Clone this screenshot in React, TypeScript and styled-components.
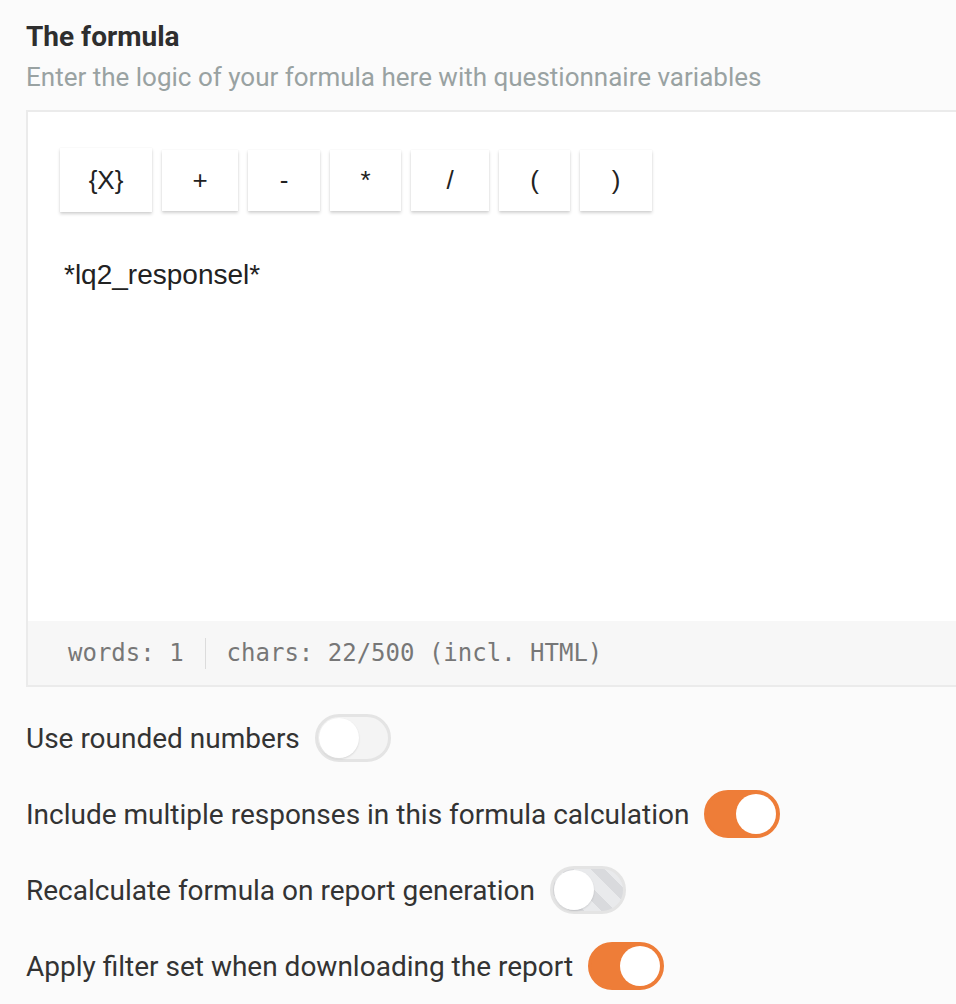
import React from 'react';
import styled, { createGlobalStyle } from 'styled-components';

const GlobalStyle = createGlobalStyle`
  html, body {
    margin: 0;
    padding: 0;
    background: #fbfbfb;
    overflow: hidden;
  }
  body {
    font-family: Roboto, 'Liberation Sans', sans-serif;
    color: #333;
  }
`;

type ToggleState = 'off' | 'on' | 'disabled';

const operators = [
  { label: '{X}', width: 92, tall: true },
  { label: '+', width: 76 },
  { label: '-', width: 72 },
  { label: '*', width: 71 },
  { label: '/', width: 78 },
  { label: '(', width: 71 },
  { label: ')', width: 72 },
];

const options: { label: string; state: ToggleState }[] = [
  { label: 'Use rounded numbers', state: 'off' },
  { label: 'Include multiple responses in this formula calculation', state: 'on' },
  { label: 'Recalculate formula on report generation', state: 'disabled' },
  { label: 'Apply filter set when downloading the report', state: 'on' },
];

const App = () => {
  return (
    <>
      <GlobalStyle />
      <Page>
        <Title>The formula</Title>
        <Subtitle>Enter the logic of your formula here with questionnaire variables</Subtitle>
        <Editor>
          <Toolbar>
            {operators.map((op) => (
              <OpButton key={op.label} $width={op.width} $tall={!!op.tall}>
                {op.label}
              </OpButton>
            ))}
          </Toolbar>
          <Content>*lq2_responsel*</Content>
          <StatusBar>
            <span>words: 1</span>
            <Divider />
            <span>chars: 22/500 (incl. HTML)</span>
          </StatusBar>
        </Editor>
        <Options>
          {options.map((opt) => (
            <OptionRow key={opt.label}>
              <span>{opt.label}</span>
              <Toggle $state={opt.state}>
                <Knob $state={opt.state} />
              </Toggle>
            </OptionRow>
          ))}
        </Options>
      </Page>
    </>
  );
};

const Page = styled.div`
  padding: 21px 0 0 26px;
`;

const Title = styled.h2`
  margin: 0;
  font-size: 28px;
  line-height: 32px;
  font-weight: 700;
  color: #2e2e2e;
`;

const Subtitle = styled.p`
  margin: 8px 0 0;
  font-size: 26px;
  line-height: 32px;
  color: #99a2a2;
`;

const Editor = styled.div`
  margin-top: 17px;
  border: 2px solid #ebebeb;
  border-right: none;
  background: #fff;
`;

const Toolbar = styled.div`
  display: flex;
  align-items: center;
  gap: 10px;
  padding: 36px 0 0 32px;
`;

const OpButton = styled.div<{ $width: number; $tall: boolean }>`
  display: flex;
  align-items: center;
  justify-content: center;
  width: ${({ $width }) => $width}px;
  height: ${({ $tall }) => ($tall ? 64 : 61)}px;
  background: #fff;
  box-shadow: 0 2px 3px rgba(0, 0, 0, 0.18), 0 0 1px rgba(0, 0, 0, 0.08);
  font-family: 'Liberation Sans', Arial, sans-serif;
  font-size: 26px;
  color: #222;
`;

const Content = styled.div`
  height: 409px;
  padding: 45px 0 0 36px;
  box-sizing: border-box;
  font-family: 'Liberation Sans', Arial, sans-serif;
  font-size: 28px;
  line-height: 36px;
  color: #222;
`;

const StatusBar = styled.div`
  display: flex;
  align-items: center;
  gap: 21px;
  height: 64px;
  padding-left: 40px;
  background: #f7f7f7;
  font-family: 'DejaVu Sans Mono', monospace;
  font-size: 24px;
  color: #777;
`;

const Divider = styled.div`
  width: 1px;
  height: 31px;
  background: #dcdcdc;
`;

const Options = styled.div`
  display: flex;
  flex-direction: column;
  gap: 28px;
  padding-top: 27px;
`;

const OptionRow = styled.div`
  display: flex;
  align-items: center;
  gap: 15px;
  font-size: 28px;
  color: #333;
`;

const Toggle = styled.div<{ $state: ToggleState }>`
  display: flex;
  align-items: center;
  justify-content: ${({ $state }) => ($state === 'on' ? 'flex-end' : 'flex-start')};
  box-sizing: border-box;
  width: 76px;
  height: 48px;
  padding: 1px;
  border-radius: 24px;
  border: 3px solid ${({ $state }) => ($state === 'on' ? '#ee7d38' : '#e4e4e4')};
  background: ${({ $state }) =>
    $state === 'on'
      ? '#ee7d38'
      : $state === 'disabled'
      ? 'repeating-linear-gradient(45deg, #e9eaec 0 12px, #d9dadd 12px 22px)'
      : '#f4f4f4'};
`;

const Knob = styled.div<{ $state: ToggleState }>`
  width: 40px;
  height: 40px;
  border-radius: 50%;
  background: #fff;
  box-shadow: ${({ $state }) => ($state === 'on' ? 'none' : '0 1px 2px rgba(0, 0, 0, 0.12)')};
`;

export default App;
